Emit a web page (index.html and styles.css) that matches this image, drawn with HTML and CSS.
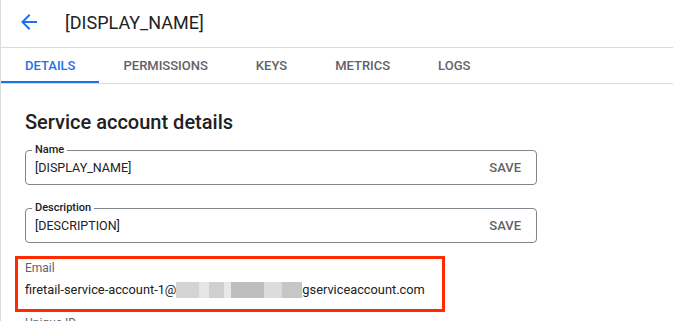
FILE: index.html
```html
<!DOCTYPE html>
<html lang="en">
<head>
	<meta charset="UTF-8">
	<meta name="viewport" content="width=device-width, initial-scale=1.0">
	<title>Service account details</title>
	<link rel="stylesheet" href="styles.css">
</head>
<body>
	<header class="topbar">
		<button type="button" class="back" aria-label="Back">
			<svg width="24" height="24" viewBox="0 0 24 24"><path d="M20 11H7.830l5.590-5.590L12 4l-8 8 8 8 1.410-1.410L7.830 13H20v-2z"/></svg>
		</button>
		<h1 class="title">[DISPLAY_NAME]</h1>
	</header>
	<nav class="tabs">
		<button type="button" class="tab active">Details</button>
		<button type="button" class="tab">Permissions</button>
		<button type="button" class="tab">Keys</button>
		<button type="button" class="tab">Metrics</button>
		<button type="button" class="tab">Logs</button>
	</nav>
	<main class="content">
		<h2 class="heading">Service account details</h2>
		<fieldset class="field">
			<legend>Name</legend>
			<span class="value">[DISPLAY_NAME]</span>
			<button type="button" class="save">Save</button>
		</fieldset>
		<fieldset class="field">
			<legend>Description</legend>
			<span class="value">[DESCRIPTION]</span>
			<button type="button" class="save">Save</button>
		</fieldset>
		<!-- email, highlighted -->
		<div class="highlight">
			<div class="label">Email</div>
			<div class="email">firetail-service-account-1@<span class="blur"></span>gserviceaccount.com</div>
		</div>
		<div class="label next">Unique ID</div>
	</main>
</body>
</html>
```

FILE: styles.css
```css
body {margin:0; min-height:321px; border-left:1px solid #dadce0; font-family:Roboto, "Liberation Sans", sans-serif; color:#202124; background:#fff; overflow:hidden;}
button {font-family:inherit; background:none; border:none; padding:0; cursor:pointer;}
.topbar {display:flex; align-items:center; height:47px; padding-left:16px; border-bottom:1px solid #dadce0;}
.back {display:flex; width:24px; height:24px; margin-top:-3px;}
.back svg {fill:#1a73e8;}
.title {margin:-3px 0 0 24px; font-size:18px; font-weight:400; color:#202124;}
.tabs {display:flex; border-bottom:1px solid #dadce0;}
.tab {height:35px; padding:1px 24px 0; font-size:13px; font-weight:500; text-transform:uppercase; color:#5f6368; border-bottom:2px solid transparent;}
.tab.active {color:#1a73e8; border-bottom-color:#1a73e8;}
.content {padding:0 24px;}
.heading {margin:26px 0 11px; font-size:20px; font-weight:500; line-height:24px;}
.field {display:flex; align-items:center; width:512px; box-sizing:border-box; height:40px; margin:0; padding:0 15px 4px 9px; border:1px solid #80868b; border-radius:4px;}
.field + .field {margin-top:18px;}
.field legend {padding:0 3px; margin-left:-3px; font-size:11px; font-weight:500; line-height:10px; color:#202124;}
.value {flex:1; font-size:12.5px;}
.save {font-size:13px; font-weight:500; color:#5f6368; text-transform:uppercase;}
.highlight {width:430px; box-sizing:border-box; margin:13px 0 0 -10px; padding:1px 7px 10px; border:3px solid #ff2a00;}
.label {font-size:12px; color:#5f6368; line-height:16px;}
.email {margin-top:5px; font-size:12.8px; line-height:18px; display:flex; align-items:center;}
.blur {display:inline-block; width:126px; height:16px; background:
	linear-gradient(90deg, #d4d4d4 0 18%, #e6e6e6 18% 26%, #cfcfcf 26% 38%, #e8e8e8 38% 44%, #bdbdbd 44% 70%, #dcdcdc 70% 84%, #c6c6c6 84% 100%);}
.next {margin-top:3px;}
```
